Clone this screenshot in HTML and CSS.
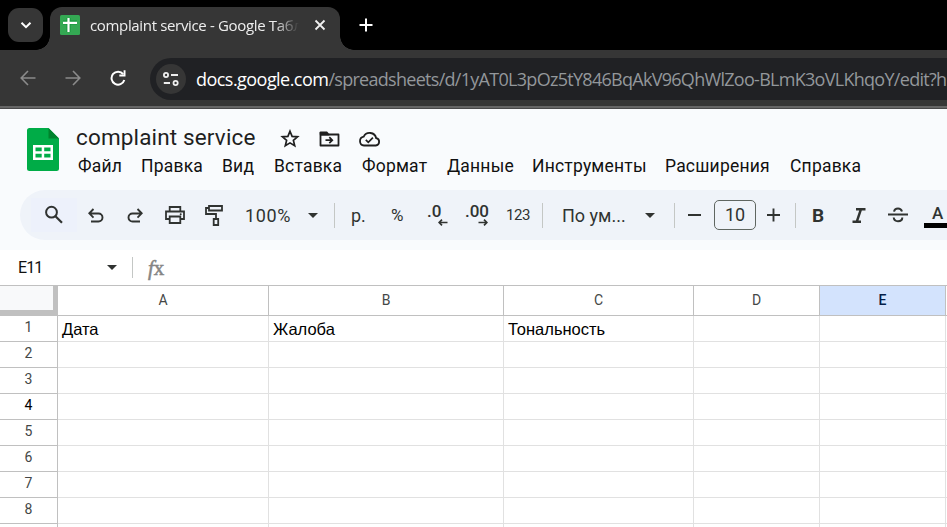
FILE: index.html
```html
<!DOCTYPE html>
<html lang="ru">
<head>
<meta charset="utf-8">
<title>complaint service</title>
<link rel="stylesheet" href="styles.css">
</head>
<body>
<div class="window">
  <div class="tabstrip">
    <div class="tab-search"><svg width="14" height="14" viewBox="0 0 14 14"><path d="M2.500 4.800 7 9.200l4.500-4.400" fill="none" stroke="#fff" stroke-width="2"/></svg></div>
    <div class="tab">
      <svg class="favicon" width="20" height="20" viewBox="0 0 20 20"><rect width="20" height="20" rx="1.500" fill="#34a853"/><path d="M3 7.500h14M8.500 3v14" fill="none" stroke="#11963a" stroke-width="4"/><path d="M3 7.800h14M8.500 3v14" fill="none" stroke="#fff" stroke-width="2.200"/></svg>
      <span class="tab-title">complaint service - Google Табл</span>
      <svg class="tab-close" width="12" height="12" viewBox="0 0 12 12"><path d="m1.500 1.500 9 9m0-9-9 9" stroke="#f0f0f0" stroke-width="1.800"/></svg>
    </div>
    <svg class="new-tab" width="14" height="14" viewBox="0 0 14 14"><path d="M7 .5v13M.5 7h13" stroke="#fff" stroke-width="2"/></svg>
  </div>
  <div class="navbar">
    <svg class="nav-icon" width="16" height="16" viewBox="0 0 16 16"><path d="M8 1 1.200 8 8 15M1.200 8H15.500" fill="none" stroke="#8b8b8b" stroke-width="1.600"/></svg>
    <svg class="nav-icon" width="16" height="16" viewBox="0 0 16 16"><path d="m8 1 6.800 7L8 15m6.800-7H.5" fill="none" stroke="#8b8b8b" stroke-width="1.600"/></svg>
    <svg class="nav-icon" width="16" height="16" viewBox="0 0 16 16"><path d="M13.200 4.200A6.500 6.500 0 1 0 14.300 10" fill="none" stroke="#fff" stroke-width="2"/><path d="M15.500.3v6.200H9.300v-1.900h4.300V.3z" fill="#fff"/></svg>
    <div class="omnibox">
      <div class="site-info"><svg width="16" height="14" viewBox="0 0 16 14"><g fill="none" stroke="#eee" stroke-width="1.800"><circle cx="3" cy="3" r="2.100"/><path d="M8 3h7M.800 11H7"/><circle cx="12.600" cy="11" r="2.100"/></g></svg></div>
      <span class="url"><b>docs.google.com</b><i>/spreadsheets/d/1yAT0L3pOz5tY846BqAkV96QhWlZoo-BLmK3oVLKhqoY/edit?h</i></span>
    </div>
  </div>
  <div class="docs">
    <header class="doc-header">
      <svg class="logo" width="32" height="43" viewBox="0 0 32 43"><path d="M2.500 0H21.500L32 10.500V40.500a2.500 2.500 0 0 1-2.500 2.500h-27A2.500 2.500 0 0 1 0 40.500v-38A2.500 2.500 0 0 1 2.500 0z" fill="#00ac47"/><path d="M21.500 0 32 10.500H21.500z" fill="#00832d"/><path d="M6 17h20v15H6zm2.500 2.500v3.800h6.200v-3.800zm8.700 0v3.800h6.300v-3.800zm-8.700 6.200v3.800h6.200v-3.800zm8.700 0v3.800h6.300v-3.800z" fill="#fff" fill-rule="evenodd"/></svg>
      <div class="heading">
        <div class="title-row">
          <span class="doc-title">complaint service</span>
          <svg class="star" width="20" height="19" viewBox="0 0 20 19"><path d="m10 2.200 2.100 5.200 5.500.4-4.200 3.600 1.300 5.400-4.700-2.900-4.700 2.900 1.300-5.400-4.200-3.600 5.500-.4z" fill="none" stroke="#1f1f1f" stroke-width="1.700"/></svg>
          <svg class="move" width="21" height="16" viewBox="0 0 21 16"><path d="M1.500 1.500v13h18V3.500H10" fill="none" stroke="#1f1f1f" stroke-width="1.800" stroke-linejoin="round"/><path d="M.6 1.500Q.6.500 1.600.5H8l2.200 2.200v2H1z" fill="#1f1f1f"/><path d="M6.500 9.200H13M10.300 6.200l3 3-3 3" fill="none" stroke="#1f1f1f" stroke-width="1.700"/></svg>
          <svg class="cloud" width="23" height="16" viewBox="0 0 23 16"><path d="M6 14.500h11.800a3.700 3.700 0 0 0 .4-7.300A6.700 6.700 0 0 0 5.700 5.600 4.500 4.500 0 0 0 6 14.500z" fill="none" stroke="#1f1f1f" stroke-width="1.800"/><path d="m7.800 8.800 2.500 2.500 4.600-4.600" fill="none" stroke="#1f1f1f" stroke-width="1.700"/></svg>
        </div>
        <nav class="menu">
          <span class="m1">Файл</span><span class="m2">Правка</span><span class="m3">Вид</span><span class="m4">Вставка</span><span class="m5">Формат</span><span class="m6">Данные</span><span class="m7">Инструменты</span><span class="m8">Расширения</span><span class="m9">Справка</span>
        </nav>
      </div>
    </header>
    <div class="toolbar">
      <div class="tool search"><svg width="20" height="20" viewBox="0 0 20 20"><circle cx="7.500" cy="7.200" r="5.400" fill="none" stroke="#303331" stroke-width="2"/><path d="m11.500 11.200 6.500 6.500" stroke="#303331" stroke-width="2.200"/></svg></div>
      <div class="tool t-undo"><svg width="16" height="15" viewBox="0 0 16 15"><path d="M3 13.500h7.500a4 4 0 0 0 0-8H1.500M5.500 1 1.300 5.300l4.200 4.300" fill="none" stroke="#303331" stroke-width="1.900"/></svg></div>
      <div class="tool t-redo"><svg width="16" height="15" viewBox="0 0 16 15"><path d="M13 13.500H5.500a4 4 0 0 1 0-8h9M10.500 1l4.200 4.300-4.200 4.300" fill="none" stroke="#303331" stroke-width="1.900"/></svg></div>
      <div class="tool t-print"><svg width="20" height="18" viewBox="0 0 20 18"><g fill="none" stroke="#303331" stroke-width="1.800"><path d="M4.700 5V1h10.600v4M4.500 13H1V5.500h18V13h-3.500"/><path d="M4.700 10.500h10.600V17H4.700z"/></g><circle cx="15.700" cy="8.200" r="1" fill="#303331"/></svg></div>
      <div class="tool t-paint"><svg width="18" height="21" viewBox="0 0 18 21"><g fill="none" stroke="#303331" stroke-width="1.800"><path d="M4 1h13v4.500H4zM4 3H1v6h10v4.500"/><path d="M8.700 14h4.500v6H8.700z"/></g></svg></div>
      <span class="zoom">100%</span><i class="caret"></i><i class="sep"></i>
      <span class="t-rub">р.</span><span class="t-pct">%</span>
      <span class="dec dec-less">.0<svg width="10" height="7" viewBox="0 0 10 7"><path d="M9.500 3.500H1M4 .6 1.100 3.500 4 6.400" fill="none" stroke="#303331" stroke-width="1.700"/></svg></span>
      <span class="dec dec-more">.00<svg width="10" height="7" viewBox="0 0 10 7"><path d="M.5 3.500H9M6 .6l2.900 2.900L6 6.400" fill="none" stroke="#303331" stroke-width="1.700"/></svg></span>
      <span class="t-123">123</span><i class="sep s2"></i>
      <span class="font">По ум...</span><i class="caret c2"></i><i class="sep s3"></i>
      <svg class="minus" width="13" height="14" viewBox="0 0 13 14"><path d="M0 7h13" stroke="#303331" stroke-width="1.900"/></svg>
      <span class="size">10</span>
      <svg class="plus" width="13" height="14" viewBox="0 0 13 14"><path d="M0 7h13M6.500.5v13" stroke="#303331" stroke-width="1.900"/></svg>
      <i class="sep s4"></i>
      <span class="bold">B</span>
      <svg class="italic" width="14" height="15" viewBox="0 0 14 15"><path d="M4 1.300h9.500M.5 13.700H9M8.900 1.300 4.800 13.700" fill="none" stroke="#303331" stroke-width="2.500"/></svg>
      <svg class="strike" width="20" height="16" viewBox="0 0 20 16"><path d="M0 7.500h20" stroke="#303331" stroke-width="1.800"/><path d="M14 4.500C13.300 2.300 12 1.500 10 1.500S6.400 2.500 6 4.600M5.700 10.500C6 13 7.700 14.200 10 14.200s4.300-1.200 4.300-3.700" fill="none" stroke="#303331" stroke-width="2"/></svg>
      <span class="color">A</span>
    </div>
    <div class="formula"><span class="cell-name">E11</span><i class="caret"></i><i class="sep"></i><span class="fx"><em>f</em>x</span></div>
    <div class="grid">
      <div class="corner"></div><div class="col">A</div><div class="col">B</div><div class="col">C</div><div class="col">D</div><div class="col active">E</div><div class="col"></div>
      <div class="row">1</div><div class="cell">Дата</div><div class="cell">Жалоба</div><div class="cell ton">Тональность</div><div class="cell"></div><div class="cell"></div><div class="cell"></div>
      <div class="row">2</div><div class="cell"></div><div class="cell"></div><div class="cell"></div><div class="cell"></div><div class="cell"></div><div class="cell"></div>
      <div class="row">3</div><div class="cell"></div><div class="cell"></div><div class="cell"></div><div class="cell"></div><div class="cell"></div><div class="cell"></div>
      <div class="row dark">4</div><div class="cell"></div><div class="cell"></div><div class="cell"></div><div class="cell"></div><div class="cell"></div><div class="cell"></div>
      <div class="row">5</div><div class="cell"></div><div class="cell"></div><div class="cell"></div><div class="cell"></div><div class="cell"></div><div class="cell"></div>
      <div class="row">6</div><div class="cell"></div><div class="cell"></div><div class="cell"></div><div class="cell"></div><div class="cell"></div><div class="cell"></div>
      <div class="row">7</div><div class="cell"></div><div class="cell"></div><div class="cell"></div><div class="cell"></div><div class="cell"></div><div class="cell"></div>
      <div class="row">8</div><div class="cell"></div><div class="cell"></div><div class="cell"></div><div class="cell"></div><div class="cell"></div><div class="cell"></div>
      <div class="row"></div><div class="cell"></div><div class="cell"></div><div class="cell"></div><div class="cell"></div><div class="cell"></div><div class="cell"></div>
    </div>
  </div>
</div>
</body>
</html>
```
FILE: styles.css
```css
* { box-sizing: border-box; }
body { margin: 0; }
svg { display: block; flex: none; }
i, b { font-style: normal; font-weight: 400; }
.window { width: 947px; height: 527px; overflow: hidden; background: #fff; font-family: Roboto, sans-serif; color: #1f1f1f; }

.tabstrip { height: 50px; background: #000; display: flex; padding-left: 8px; }
.tab-search { width: 35px; height: 34px; margin-top: 8px; border-radius: 11px; background: #363636; display: flex; align-items: center; justify-content: center; }
.tab { position: relative; width: 290px; height: 43px; margin: 7px 0 0 7px; padding-left: 10px; border-radius: 12px 12px 0 0; background: #363636; display: flex; align-items: center; padding-bottom: 7px; }
.tab::before, .tab::after { content: ""; position: absolute; bottom: 0; width: 14px; height: 14px; }
.tab::before { left: -14px; background: radial-gradient(circle at 0 0, transparent 13.5px, #363636 14px); }
.tab::after { right: -14px; background: radial-gradient(circle at 100% 0, transparent 13.5px, #363636 14px); }
.tab-title { width: 209px; margin-left: 10px; overflow: hidden; white-space: nowrap; font: 15px/24px "Open Sans", sans-serif; letter-spacing: -0.34px; color: #eee; -webkit-mask-image: linear-gradient(90deg, #000 185px, transparent 209px); mask-image: linear-gradient(90deg, #000 185px, transparent 209px); }
.tab-close { margin-left: 15px; }
.new-tab { margin: 18px 0 0 19px; }

.navbar { height: 59px; background: linear-gradient(#363636, #363636) 0 0 / 100% 56px no-repeat, #666; border-bottom: 1px solid #49494a; display: flex; padding: 8px 0 0 20px; box-shadow: none; }
.nav-icon { margin: 12px 29px 0 0; }
.omnibox { flex: 1; margin-left: -5px; height: 42px; border-radius: 21px 0 0 21px; background: #202124; display: flex; align-items: center; padding-left: 6px; overflow: hidden; }
.site-info { flex: none; width: 30px; height: 30px; border-radius: 50%; background: #363636; display: flex; align-items: center; justify-content: center; }
.url { margin-left: 10px; white-space: nowrap; font: 18px/26px "Open Sans", sans-serif; color: #fff; }
.url b { letter-spacing: -0.54px; }
.url i { letter-spacing: -0.71px; color: #93979b; }

.docs { height: 418px; background: #f9fbfd; }
.doc-header { height: 81px; display: flex; padding-left: 27px; }
.logo { margin-top: 19px; }
.heading { margin-left: 17px; }
.title-row { height: 44px; padding-top: 12px; display: flex; align-items: flex-start; }
.doc-title { width: 204px; font-size: 22.5px; line-height: 32px; letter-spacing: 0.15px; white-space: nowrap; }
.star { margin-top: 8px; }
.move { margin: 10px 0 0 19px; }
.cloud { margin: 10px 0 0 18px; }
.menu { display: flex; font-size: 17.5px; line-height: 26px; letter-spacing: 0.2px; white-space: nowrap; padding-left: 2px; color: #111; }
.m1 { width: 63px; } .m2 { width: 81px; } .m3 { width: 52px; } .m4 { width: 88px; } .m5 { width: 85px; }
.m6 { width: 85px; } .m7 { width: 133px; } .m8 { width: 125px; }

.toolbar { height: 50px; margin-left: 20px; border-radius: 25px 0 0 25px; background: #eff3f9; display: flex; align-items: center; color: #303331; overflow: hidden; white-space: nowrap; }
.tool { display: flex; flex: none; align-items: center; justify-content: center; }
.search { width: 46px; height: 34px; margin-left: 11px; background: #edf1fb; }
.t-undo { width: 16px; margin-left: 11px; } .t-redo { width: 16px; margin-left: 23px; }
.t-print { width: 20px; margin-left: 22px; } .t-paint { width: 18px; margin-left: 20px; }
.zoom { width: 63px; margin-left: 22px; font-size: 18px; letter-spacing: 0.6px; }
.caret { flex: none; width: 0; height: 0; border: 5px solid transparent; border-top-color: #303331; border-bottom: 0; }
.sep { flex: none; width: 1px; height: 25px; margin-left: 16px; background: #c4c7c5; }
.t-rub { width: 40px; margin-left: 16px; font-size: 18px; }
.t-pct { width: 36px; font-size: 17px; }
.dec { height: 24px; font-size: 17px; line-height: 18px; font-weight: 500; display: flex; flex-direction: column; margin-top: -2px; }
.dec svg { margin-top: -1px; }
.dec-less { width: 21px; align-items: flex-start; } .dec-less svg { margin-left: 11px; }
.dec-more { width: 22px; margin-left: 19px; align-items: flex-end; } .dec-more svg { margin-right: 1px; }
.t-123 { width: 24px; margin-left: 17px; font-size: 15px; letter-spacing: -0.4px; }
.s2 { margin-left: 12px; }
.font { width: 83px; margin-left: 19px; font-size: 18px; letter-spacing: 0; }
.s3 { margin-left: 19px; }
.minus { margin-left: 13px; }
.size { flex: none; width: 42px; height: 30px; margin-left: 13px; border: 1px solid #5f6661; border-radius: 5px; font-size: 18px; line-height: 28px; text-align: center; }
.plus { margin-left: 11px; } .s4 { margin-left: 15px; }
.bold { width: 14px; margin-left: 16px; font-size: 19px; font-weight: 700; }
.italic { margin-left: 26px; } .strike { margin-left: 22px; }
.color { flex: none; margin-left: 16px; width: 30px; height: 25px; padding-left: 8px; border-bottom: 5px solid #000; font-size: 17px; line-height: 20px; font-weight: 500; }
.zoom, .t-rub, .t-pct, .dec, .t-123, .font, .bold { flex-shrink: 0; }

.formula { height: 45px; border-top: 10px solid #f9fbfd; background: #fff; display: flex; align-items: center; padding-left: 18px; }
.cell-name { width: 89px; font-size: 16px; letter-spacing: -0.9px; color: #111; }
.formula .sep { margin-left: 15px; height: 21px; }
.fx { margin-left: 15px; font: 21px/24px "Liberation Serif", serif; color: #858585; -webkit-text-stroke: 0.5px #858585; }

.grid { display: grid; grid-template-columns: 58px 211px 235px 190px 126px 126px 126px; grid-template-rows: 30px repeat(9, 26px); border-top: 1px solid #c0c0c0; background: #fff; }
.corner { background: #f8f9fa; border: solid #c0c0c0; border-width: 0 5px 6px 0; }
.col, .row { border-right: 1px solid #c0c0c0; border-bottom: 1px solid #c0c0c0; color: #444746; text-align: center; }
.col { font-size: 14px; line-height: 29px; }
.row { font-size: 14px; line-height: 23px; }
.dark { color: #000; }
.active { background: #d3e3fd; color: #041e49; font-weight: 500; }
.cell { border-right: 1px solid #e1e1e1; border-bottom: 1px solid #e1e1e1; padding-left: 4px; font: 16.5px/27px "Liberation Sans", sans-serif; color: #000; }
```
